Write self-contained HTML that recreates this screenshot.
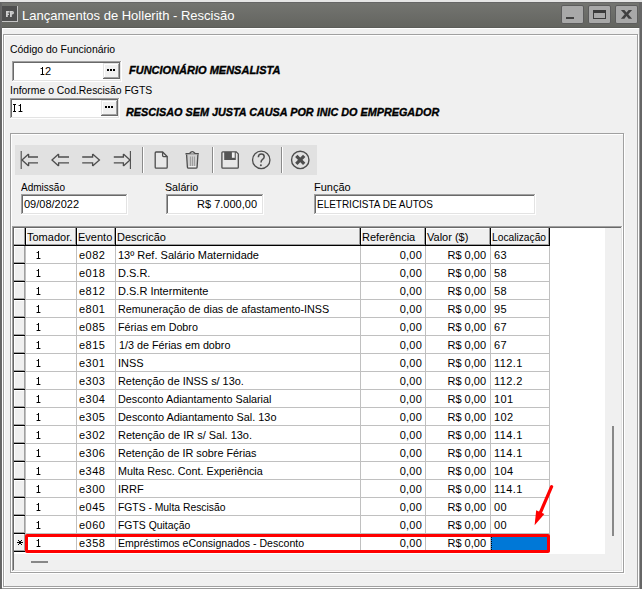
<!DOCTYPE html>
<html><head><meta charset="utf-8"><style>
html,body{margin:0;padding:0;}
body{width:642px;height:589px;overflow:hidden;position:relative;background:#f0f0f0;}
body>div,body>svg{position:absolute;}
.t{font-family:"Liberation Sans",sans-serif;font-size:11px;line-height:13px;color:#000;white-space:pre;}
</style></head><body>
<div style="left:0px;top:0px;width:642px;height:589px;background:#f0f0f0"></div>
<div style="left:0px;top:0px;width:642px;height:2px;background:#e6e6e6"></div>
<div style="left:0px;top:2px;width:642px;height:26px;background:linear-gradient(#747571,#63645f)"></div>
<div style="left:0px;top:2px;width:642px;height:1px;background:#666"></div>
<div style="left:0px;top:27px;width:642px;height:1px;background:#5c5d59"></div>
<div style="left:0px;top:2px;width:1px;height:587px;background:#646464"></div>
<div style="left:1px;top:2px;width:1px;height:587px;background:#686868"></div>
<div style="left:639px;top:2px;width:3px;height:587px;background:#666"></div>
<div style="left:639px;top:28px;width:1px;height:561px;background:#9a9a9a"></div>
<div style="left:2px;top:588px;width:638px;height:1px;background:#9a9a9a"></div>
<div style="left:2px;top:28px;width:637px;height:1px;background:#fff"></div>
<div style="left:2px;top:28px;width:1px;height:560px;background:#fff"></div>
<div style="left:4px;top:587px;width:635px;height:1px;background:#fff"></div>
<div style="left:638px;top:35px;width:1px;height:553px;background:#fff"></div>
<div style="left:4px;top:35px;width:634px;height:1px;background:#fff"></div>
<div style="left:4px;top:35px;width:1px;height:552px;background:#fff"></div>
<div style="left:3px;top:34px;width:635px;height:1px;background:#a0a0a0"></div>
<div style="left:3px;top:34px;width:1px;height:553px;background:#a0a0a0"></div>
<div style="left:3px;top:586px;width:635px;height:1px;background:#a0a0a0"></div>
<div style="left:637px;top:34px;width:1px;height:553px;background:#a0a0a0"></div>
<div style="left:2px;top:6px;width:16px;height:16px;background:#c4c4c4"></div>
<div style="left:2px;top:6px;width:15px;height:15px;background:#4f4f4f"></div>
<svg style="left:2px;top:6px" width="15" height="15" viewBox="2 6 15 15"><g fill="#cfcfcf"><rect x="6" y="11" width="1.8" height="6"/><rect x="6" y="11" width="3.6" height="1.6"/><rect x="6" y="13.6" width="3" height="1.4"/><rect x="10" y="11" width="1.8" height="6"/><path d="M10 11 H12.2 Q14 11 14 12.8 Q14 14.6 12.2 14.6 H10 V13.2 H12 Q12.5 13.2 12.5 12.8 Q12.5 12.4 12 12.4 H10 Z"/></g></svg>
<div class="t" style="left:22px;top:9px;font-size:13px;color:#fff">Lançamentos de Hollerith - Rescisão</div>
<div style="left:561px;top:5px;width:21px;height:17px;background:#a8a8a8;border:1px solid #5c5c5c;border-radius:2px"></div>
<div style="left:566px;top:17px;width:8px;height:2px;background:#404040"></div>
<div style="left:588px;top:5px;width:21px;height:17px;background:#a8a8a8;border:1px solid #5c5c5c;border-radius:2px"></div>
<div style="left:593px;top:10px;width:13px;height:9px;border:1px solid #3a3a3a;border-top-width:3px;box-sizing:border-box"></div>
<div style="left:615px;top:5px;width:21px;height:17px;background:#a8a8a8;border:1px solid #5c5c5c;border-radius:2px"></div>
<svg style="left:620px;top:9px" width="14" height="11" viewBox="620 9 14 11"><path d="M620.9 9.9 H624.4 L626.5 12.6 L628.6 9.9 H632.1 L628.3 14.35 L632.1 18.8 H628.6 L626.5 16.1 L624.4 18.8 H620.9 L624.7 14.35 Z" fill="#404040"/></svg>
<div class="t" style="left:10px;top:43px;transform:scaleX(0.95);transform-origin:left">Código do Funcionário</div>
<div style="left:12px;top:61px;width:110px;height:21px;background:#fff"></div>
<div style="left:12px;top:61px;width:110px;height:1px;background:#a0a0a0"></div>
<div style="left:12px;top:61px;width:1px;height:21px;background:#a0a0a0"></div>
<div style="left:12px;top:81px;width:110px;height:1px;background:#fff"></div>
<div style="left:121px;top:61px;width:1px;height:21px;background:#fff"></div>
<div style="left:13px;top:62px;width:108px;height:1px;background:#696969"></div>
<div style="left:13px;top:62px;width:1px;height:19px;background:#696969"></div>
<div style="left:13px;top:80px;width:108px;height:1px;background:#e3e3e3"></div>
<div style="left:120px;top:62px;width:1px;height:19px;background:#e3e3e3"></div>
<div style="left:42px;top:67px;width:1px;height:8px;background:#000"></div>
<div style="left:41px;top:68px;width:1px;height:1px;background:#222"></div>
<div style="left:40px;top:68px;width:1px;height:1px;background:#aaa"></div>
<div style="left:41px;top:74px;width:3px;height:1px;background:#000"></div>
<div style="left:40px;top:74px;width:1px;height:1px;background:#999"></div>
<div style="left:44px;top:74px;width:1px;height:1px;background:#999"></div>
<div class="t" style="left:45px;top:65px;">2</div>
<div style="left:103px;top:63px;width:17px;height:16px;background:#f0f0f0"></div>
<div style="left:103px;top:63px;width:17px;height:1px;background:#e3e3e3"></div>
<div style="left:103px;top:63px;width:1px;height:16px;background:#e3e3e3"></div>
<div style="left:103px;top:78px;width:17px;height:1px;background:#696969"></div>
<div style="left:119px;top:63px;width:1px;height:16px;background:#696969"></div>
<div style="left:104px;top:64px;width:15px;height:1px;background:#fff"></div>
<div style="left:104px;top:64px;width:1px;height:14px;background:#fff"></div>
<div style="left:104px;top:77px;width:15px;height:1px;background:#a0a0a0"></div>
<div style="left:118px;top:64px;width:1px;height:14px;background:#a0a0a0"></div>
<div style="left:107px;top:69px;width:2px;height:2px;background:#000"></div>
<div style="left:110px;top:69px;width:2px;height:2px;background:#000"></div>
<div style="left:113px;top:69px;width:2px;height:2px;background:#000"></div>
<div class="t" style="left:129px;top:64px;font-weight:bold;font-style:italic;-webkit-text-stroke:0.35px #000">FUNCIONÁRIO MENSALISTA</div>
<div class="t" style="left:10px;top:84px;transform:scaleX(0.946);transform-origin:left">Informe o Cod.Rescisão FGTS</div>
<div style="left:10px;top:98px;width:110px;height:21px;background:#fff"></div>
<div style="left:10px;top:98px;width:110px;height:1px;background:#a0a0a0"></div>
<div style="left:10px;top:98px;width:1px;height:21px;background:#a0a0a0"></div>
<div style="left:10px;top:118px;width:110px;height:1px;background:#fff"></div>
<div style="left:119px;top:98px;width:1px;height:21px;background:#fff"></div>
<div style="left:11px;top:99px;width:108px;height:1px;background:#696969"></div>
<div style="left:11px;top:99px;width:1px;height:19px;background:#696969"></div>
<div style="left:11px;top:117px;width:108px;height:1px;background:#e3e3e3"></div>
<div style="left:118px;top:99px;width:1px;height:19px;background:#e3e3e3"></div>
<div style="left:13px;top:104px;width:3px;height:1px;background:#000"></div>
<div style="left:14px;top:104px;width:1px;height:8px;background:#000"></div>
<div style="left:13px;top:111px;width:3px;height:1px;background:#000"></div>
<div style="left:20px;top:104px;width:1px;height:8px;background:#000"></div>
<div style="left:19px;top:105px;width:1px;height:1px;background:#222"></div>
<div style="left:18px;top:105px;width:1px;height:1px;background:#aaa"></div>
<div style="left:19px;top:111px;width:3px;height:1px;background:#000"></div>
<div style="left:18px;top:111px;width:1px;height:1px;background:#999"></div>
<div style="left:22px;top:111px;width:1px;height:1px;background:#999"></div>
<div style="left:101px;top:100px;width:17px;height:16px;background:#f0f0f0"></div>
<div style="left:101px;top:100px;width:17px;height:1px;background:#e3e3e3"></div>
<div style="left:101px;top:100px;width:1px;height:16px;background:#e3e3e3"></div>
<div style="left:101px;top:115px;width:17px;height:1px;background:#696969"></div>
<div style="left:117px;top:100px;width:1px;height:16px;background:#696969"></div>
<div style="left:102px;top:101px;width:15px;height:1px;background:#fff"></div>
<div style="left:102px;top:101px;width:1px;height:14px;background:#fff"></div>
<div style="left:102px;top:114px;width:15px;height:1px;background:#a0a0a0"></div>
<div style="left:116px;top:101px;width:1px;height:14px;background:#a0a0a0"></div>
<div style="left:105px;top:106px;width:2px;height:2px;background:#000"></div>
<div style="left:108px;top:106px;width:2px;height:2px;background:#000"></div>
<div style="left:111px;top:106px;width:2px;height:2px;background:#000"></div>
<div class="t" style="left:126px;top:106px;font-weight:bold;font-style:italic;-webkit-text-stroke:0.35px #000;transform:scaleX(0.983);transform-origin:left">RESCISAO SEM JUSTA CAUSA POR INIC DO EMPREGADOR</div>
<div style="left:11px;top:573px;width:614px;height:1px;background:#fff"></div>
<div style="left:624px;top:134px;width:1px;height:440px;background:#fff"></div>
<div style="left:11px;top:134px;width:613px;height:1px;background:#fff"></div>
<div style="left:11px;top:134px;width:1px;height:439px;background:#fff"></div>
<div style="left:10px;top:133px;width:614px;height:1px;background:#a0a0a0"></div>
<div style="left:10px;top:133px;width:1px;height:440px;background:#a0a0a0"></div>
<div style="left:10px;top:572px;width:614px;height:1px;background:#a0a0a0"></div>
<div style="left:623px;top:133px;width:1px;height:440px;background:#a0a0a0"></div>
<div style="left:15px;top:145px;width:302px;height:30px;background:#e1e1e1"></div>
<div class="t" style="left:21px;top:181px;transform:scaleX(0.91);transform-origin:left">Admissão</div>
<div style="left:21px;top:194px;width:107px;height:21px;background:#fff"></div>
<div style="left:21px;top:194px;width:107px;height:1px;background:#a0a0a0"></div>
<div style="left:21px;top:194px;width:1px;height:21px;background:#a0a0a0"></div>
<div style="left:21px;top:214px;width:107px;height:1px;background:#fff"></div>
<div style="left:127px;top:194px;width:1px;height:21px;background:#fff"></div>
<div style="left:22px;top:195px;width:105px;height:1px;background:#696969"></div>
<div style="left:22px;top:195px;width:1px;height:19px;background:#696969"></div>
<div style="left:22px;top:213px;width:105px;height:1px;background:#e3e3e3"></div>
<div style="left:126px;top:195px;width:1px;height:19px;background:#e3e3e3"></div>
<div class="t" style="left:24px;top:198px;">09/08/2022</div>
<div class="t" style="left:165px;top:181px;transform:scaleX(0.97);transform-origin:left">Salário</div>
<div style="left:166px;top:194px;width:98px;height:21px;background:#fff"></div>
<div style="left:166px;top:194px;width:98px;height:1px;background:#a0a0a0"></div>
<div style="left:166px;top:194px;width:1px;height:21px;background:#a0a0a0"></div>
<div style="left:166px;top:214px;width:98px;height:1px;background:#fff"></div>
<div style="left:263px;top:194px;width:1px;height:21px;background:#fff"></div>
<div style="left:167px;top:195px;width:96px;height:1px;background:#696969"></div>
<div style="left:167px;top:195px;width:1px;height:19px;background:#696969"></div>
<div style="left:167px;top:213px;width:96px;height:1px;background:#e3e3e3"></div>
<div style="left:262px;top:195px;width:1px;height:19px;background:#e3e3e3"></div>
<div class="t" style="left:166px;top:198px;width:91px;text-align:right">R$ 7.000,00</div>
<div class="t" style="left:314px;top:181px;">Função</div>
<div style="left:314px;top:194px;width:222px;height:21px;background:#fff"></div>
<div style="left:314px;top:194px;width:222px;height:1px;background:#a0a0a0"></div>
<div style="left:314px;top:194px;width:1px;height:21px;background:#a0a0a0"></div>
<div style="left:314px;top:214px;width:222px;height:1px;background:#fff"></div>
<div style="left:535px;top:194px;width:1px;height:21px;background:#fff"></div>
<div style="left:315px;top:195px;width:220px;height:1px;background:#696969"></div>
<div style="left:315px;top:195px;width:1px;height:19px;background:#696969"></div>
<div style="left:315px;top:213px;width:220px;height:1px;background:#e3e3e3"></div>
<div style="left:534px;top:195px;width:1px;height:19px;background:#e3e3e3"></div>
<div class="t" style="left:317px;top:198px;transform:scaleX(0.906);transform-origin:left">ELETRICISTA DE AUTOS</div>
<svg style="left:15px;top:145px" width="303" height="30" viewBox="15 145 303 30">
<g fill="none" stroke="#4d4d4d" stroke-width="1.3" stroke-linejoin="miter">
<path d="M21.2 151 V169" stroke-width="1.1"/>
<path d="M28.6 154.1 L22 160 L28.6 165.9 M28.6 154.1 V157 H38 M28.6 165.9 V162.8 H38"/>
<path d="M58.6 154.1 L52 160 L58.6 165.9 M58.6 154.1 V157 H69 M58.6 165.9 V162.8 H69"/>
<path d="M92.6 154.1 L99.4 160 L92.6 165.9 M92.6 154.1 V157 H82.2 M92.6 165.9 V162.8 H82.2"/>
<path d="M123.4 154.1 L130 160 L123.4 165.9 M123.4 154.1 V157 H113.8 M123.4 165.9 V162.8 H113.8"/>
<path d="M130.4 151 V169" stroke-width="1.1"/>
</g>
<path d="M142.5 147 V173" stroke="#8a8a8a" stroke-width="1"/><path d="M143.5 147 V173" stroke="#fff" stroke-width="1"/>
<path d="M212.5 147 V173" stroke="#8a8a8a" stroke-width="1"/><path d="M213.5 147 V173" stroke="#fff" stroke-width="1"/>
<path d="M281.5 147 V173" stroke="#8a8a8a" stroke-width="1"/><path d="M282.5 147 V173" stroke="#fff" stroke-width="1"/>
<!-- document -->
<path d="M156.1 152 H162.6 L167.2 156.6 V167.3 Q167.2 168.2 166.3 168.2 H156.1 Q155.2 168.2 155.2 167.3 V152.9 Q155.2 152 156.1 152 Z" fill="#e8e8e8" stroke="#4d4d4d" stroke-width="1.3"/>
<path d="M162.6 152 V155.6 Q162.6 156.6 163.6 156.6 H167.2" fill="none" stroke="#4d4d4d" stroke-width="1.3"/>
<!-- trash -->
<path d="M185.5 153.8 H198.8" stroke="#4d4d4d" stroke-width="1.6"/>
<path d="M189.6 153.5 Q192.3 149.8 195 153.5" fill="#f0f0f0" stroke="#4d4d4d" stroke-width="1.3"/>
<path d="M186.6 154.6 L187.4 167.2 Q187.5 168.2 188.5 168.2 H196 Q197 168.2 197.1 167.2 L197.9 154.6" fill="#d0d0d0" stroke="#4d4d4d" stroke-width="1.3"/>
<path d="M190.4 156.5 V166 M192.4 156.5 V166 M194.4 156.5 V166" stroke="#8a8a8a" stroke-width="0.8"/><path d="M188.6 166.6 H196" stroke="#f4f4f4" stroke-width="0.9"/>
<!-- floppy -->
<path d="M222.8 151.8 H236.2 L238.3 153.9 V167.3 Q238.3 168.2 237.4 168.2 H222.8 Q221.9 168.2 221.9 167.3 V152.7 Q221.9 151.8 222.8 151.8 Z" fill="#e8e8e8" stroke="#4d4d4d" stroke-width="1.3"/>
<rect x="224.2" y="152" width="11.6" height="8" fill="#555"/>
<rect x="231.9" y="152.4" width="2.8" height="5.4" fill="#f2f2f2"/>
<!-- help -->
<circle cx="261.25" cy="159.9" r="8.7" fill="none" stroke="#4d4d4d" stroke-width="1.3"/>
<path d="M258.3 157.3 Q258.5 154.1 261.3 154.1 Q264.2 154.1 264.2 156.8 Q264.2 158.4 262.6 159.4 Q261 160.4 261 162.4" fill="none" stroke="#4d4d4d" stroke-width="1.5"/><circle cx="260.9" cy="165.3" r="1" fill="#4d4d4d"/>
<!-- close -->
<circle cx="300.25" cy="159.9" r="8.7" fill="none" stroke="#4d4d4d" stroke-width="1.4"/>
<path d="M296.3 155.9 L304.2 163.8 M304.2 155.9 L296.3 163.8" stroke="#4d4d4d" stroke-width="3.3"/>
</svg>
<div style="left:12px;top:226px;width:611px;height:346px;background:#f0f0f0"></div>
<div style="left:12px;top:226px;width:611px;height:1px;background:#a0a0a0"></div>
<div style="left:12px;top:226px;width:1px;height:346px;background:#a0a0a0"></div>
<div style="left:12px;top:571px;width:611px;height:1px;background:#fff"></div>
<div style="left:622px;top:226px;width:1px;height:346px;background:#fff"></div>
<div style="left:13px;top:227px;width:609px;height:1px;background:#696969"></div>
<div style="left:13px;top:227px;width:1px;height:344px;background:#696969"></div>
<div style="left:13px;top:570px;width:609px;height:1px;background:#e3e3e3"></div>
<div style="left:621px;top:227px;width:1px;height:344px;background:#e3e3e3"></div>
<div style="left:14px;top:228px;width:591px;height:326px;background:#fff"></div>
<div style="left:14px;top:228px;width:12px;height:18px;background:#f0f0f0"></div>
<div style="left:14px;top:228px;width:12px;height:1px;background:#fff"></div>
<div style="left:14px;top:228px;width:1px;height:18px;background:#fff"></div>
<div style="left:14px;top:244px;width:11px;height:1px;background:#a0a0a0"></div>
<div style="left:24px;top:228px;width:1px;height:17px;background:#a0a0a0"></div>
<div style="left:14px;top:245px;width:12px;height:1px;background:#000"></div>
<div style="left:25px;top:228px;width:1px;height:18px;background:#000"></div>
<div style="left:26px;top:228px;width:51px;height:18px;background:#f0f0f0"></div>
<div style="left:26px;top:228px;width:51px;height:1px;background:#fff"></div>
<div style="left:26px;top:228px;width:1px;height:18px;background:#fff"></div>
<div style="left:26px;top:244px;width:50px;height:1px;background:#a0a0a0"></div>
<div style="left:75px;top:228px;width:1px;height:17px;background:#a0a0a0"></div>
<div style="left:26px;top:245px;width:51px;height:1px;background:#000"></div>
<div style="left:76px;top:228px;width:1px;height:18px;background:#000"></div>
<div class="t" style="left:27px;top:231px;">Tomador.</div>
<div style="left:77px;top:228px;width:39px;height:18px;background:#f0f0f0"></div>
<div style="left:77px;top:228px;width:39px;height:1px;background:#fff"></div>
<div style="left:77px;top:228px;width:1px;height:18px;background:#fff"></div>
<div style="left:77px;top:244px;width:38px;height:1px;background:#a0a0a0"></div>
<div style="left:114px;top:228px;width:1px;height:17px;background:#a0a0a0"></div>
<div style="left:77px;top:245px;width:39px;height:1px;background:#000"></div>
<div style="left:115px;top:228px;width:1px;height:18px;background:#000"></div>
<div class="t" style="left:78px;top:231px;">Evento</div>
<div style="left:116px;top:228px;width:245px;height:18px;background:#f0f0f0"></div>
<div style="left:116px;top:228px;width:245px;height:1px;background:#fff"></div>
<div style="left:116px;top:228px;width:1px;height:18px;background:#fff"></div>
<div style="left:116px;top:244px;width:244px;height:1px;background:#a0a0a0"></div>
<div style="left:359px;top:228px;width:1px;height:17px;background:#a0a0a0"></div>
<div style="left:116px;top:245px;width:245px;height:1px;background:#000"></div>
<div style="left:360px;top:228px;width:1px;height:18px;background:#000"></div>
<div class="t" style="left:117px;top:231px;">Descricão</div>
<div style="left:361px;top:228px;width:65px;height:18px;background:#f0f0f0"></div>
<div style="left:361px;top:228px;width:65px;height:1px;background:#fff"></div>
<div style="left:361px;top:228px;width:1px;height:18px;background:#fff"></div>
<div style="left:361px;top:244px;width:64px;height:1px;background:#a0a0a0"></div>
<div style="left:424px;top:228px;width:1px;height:17px;background:#a0a0a0"></div>
<div style="left:361px;top:245px;width:65px;height:1px;background:#000"></div>
<div style="left:425px;top:228px;width:1px;height:18px;background:#000"></div>
<div class="t" style="left:362px;top:231px;">Referência</div>
<div style="left:426px;top:228px;width:65px;height:18px;background:#f0f0f0"></div>
<div style="left:426px;top:228px;width:65px;height:1px;background:#fff"></div>
<div style="left:426px;top:228px;width:1px;height:18px;background:#fff"></div>
<div style="left:426px;top:244px;width:64px;height:1px;background:#a0a0a0"></div>
<div style="left:489px;top:228px;width:1px;height:17px;background:#a0a0a0"></div>
<div style="left:426px;top:245px;width:65px;height:1px;background:#000"></div>
<div style="left:490px;top:228px;width:1px;height:18px;background:#000"></div>
<div class="t" style="left:427px;top:231px;">Valor ($)</div>
<div style="left:491px;top:228px;width:59px;height:18px;background:#f0f0f0"></div>
<div style="left:491px;top:228px;width:59px;height:1px;background:#fff"></div>
<div style="left:491px;top:228px;width:1px;height:18px;background:#fff"></div>
<div style="left:491px;top:244px;width:58px;height:1px;background:#a0a0a0"></div>
<div style="left:548px;top:228px;width:1px;height:17px;background:#a0a0a0"></div>
<div style="left:491px;top:245px;width:59px;height:1px;background:#000"></div>
<div style="left:549px;top:228px;width:1px;height:18px;background:#000"></div>
<div class="t" style="left:492px;top:231px;transform:scaleX(0.93);transform-origin:left">Localização</div>
<div style="left:14px;top:246px;width:12px;height:18px;background:#f0f0f0"></div>
<div style="left:14px;top:246px;width:12px;height:1px;background:#fff"></div>
<div style="left:14px;top:246px;width:1px;height:18px;background:#fff"></div>
<div style="left:14px;top:262px;width:11px;height:1px;background:#a0a0a0"></div>
<div style="left:24px;top:246px;width:1px;height:17px;background:#a0a0a0"></div>
<div style="left:14px;top:263px;width:12px;height:1px;background:#000"></div>
<div style="left:25px;top:246px;width:1px;height:18px;background:#c0c0c0"></div>
<div style="left:76px;top:246px;width:1px;height:18px;background:#c0c0c0"></div>
<div style="left:115px;top:246px;width:1px;height:18px;background:#c0c0c0"></div>
<div style="left:360px;top:246px;width:1px;height:18px;background:#c0c0c0"></div>
<div style="left:425px;top:246px;width:1px;height:18px;background:#c0c0c0"></div>
<div style="left:490px;top:246px;width:1px;height:18px;background:#c0c0c0"></div>
<div style="left:549px;top:246px;width:1px;height:18px;background:#c0c0c0"></div>
<div style="left:26px;top:263px;width:524px;height:1px;background:#c0c0c0"></div>
<div style="left:38px;top:251px;width:1px;height:8px;background:#000"></div>
<div style="left:37px;top:252px;width:1px;height:1px;background:#222"></div>
<div style="left:36px;top:252px;width:1px;height:1px;background:#aaa"></div>
<div style="left:37px;top:258px;width:3px;height:1px;background:#000"></div>
<div style="left:36px;top:258px;width:1px;height:1px;background:#999"></div>
<div style="left:40px;top:258px;width:1px;height:1px;background:#999"></div>
<div class="t" style="left:79px;top:249px;letter-spacing:0.5px">e082</div>
<div class="t" style="left:118px;top:249px;">13º Ref. Salário Maternidade</div>
<div class="t" style="left:361px;top:249px;width:61px;text-align:right;letter-spacing:0.2px">0,00</div>
<div class="t" style="left:426px;top:249px;width:60px;text-align:right">R$ 0,00</div>
<div class="t" style="left:494px;top:249px;letter-spacing:0.4px">63</div>
<div style="left:14px;top:264px;width:12px;height:18px;background:#f0f0f0"></div>
<div style="left:14px;top:264px;width:12px;height:1px;background:#fff"></div>
<div style="left:14px;top:264px;width:1px;height:18px;background:#fff"></div>
<div style="left:14px;top:280px;width:11px;height:1px;background:#a0a0a0"></div>
<div style="left:24px;top:264px;width:1px;height:17px;background:#a0a0a0"></div>
<div style="left:14px;top:281px;width:12px;height:1px;background:#000"></div>
<div style="left:25px;top:264px;width:1px;height:18px;background:#c0c0c0"></div>
<div style="left:76px;top:264px;width:1px;height:18px;background:#c0c0c0"></div>
<div style="left:115px;top:264px;width:1px;height:18px;background:#c0c0c0"></div>
<div style="left:360px;top:264px;width:1px;height:18px;background:#c0c0c0"></div>
<div style="left:425px;top:264px;width:1px;height:18px;background:#c0c0c0"></div>
<div style="left:490px;top:264px;width:1px;height:18px;background:#c0c0c0"></div>
<div style="left:549px;top:264px;width:1px;height:18px;background:#c0c0c0"></div>
<div style="left:26px;top:281px;width:524px;height:1px;background:#c0c0c0"></div>
<div style="left:38px;top:269px;width:1px;height:8px;background:#000"></div>
<div style="left:37px;top:270px;width:1px;height:1px;background:#222"></div>
<div style="left:36px;top:270px;width:1px;height:1px;background:#aaa"></div>
<div style="left:37px;top:276px;width:3px;height:1px;background:#000"></div>
<div style="left:36px;top:276px;width:1px;height:1px;background:#999"></div>
<div style="left:40px;top:276px;width:1px;height:1px;background:#999"></div>
<div class="t" style="left:79px;top:267px;letter-spacing:0.5px">e018</div>
<div class="t" style="left:118px;top:267px;">D.S.R.</div>
<div class="t" style="left:361px;top:267px;width:61px;text-align:right;letter-spacing:0.2px">0,00</div>
<div class="t" style="left:426px;top:267px;width:60px;text-align:right">R$ 0,00</div>
<div class="t" style="left:494px;top:267px;letter-spacing:0.4px">58</div>
<div style="left:14px;top:282px;width:12px;height:18px;background:#f0f0f0"></div>
<div style="left:14px;top:282px;width:12px;height:1px;background:#fff"></div>
<div style="left:14px;top:282px;width:1px;height:18px;background:#fff"></div>
<div style="left:14px;top:298px;width:11px;height:1px;background:#a0a0a0"></div>
<div style="left:24px;top:282px;width:1px;height:17px;background:#a0a0a0"></div>
<div style="left:14px;top:299px;width:12px;height:1px;background:#000"></div>
<div style="left:25px;top:282px;width:1px;height:18px;background:#c0c0c0"></div>
<div style="left:76px;top:282px;width:1px;height:18px;background:#c0c0c0"></div>
<div style="left:115px;top:282px;width:1px;height:18px;background:#c0c0c0"></div>
<div style="left:360px;top:282px;width:1px;height:18px;background:#c0c0c0"></div>
<div style="left:425px;top:282px;width:1px;height:18px;background:#c0c0c0"></div>
<div style="left:490px;top:282px;width:1px;height:18px;background:#c0c0c0"></div>
<div style="left:549px;top:282px;width:1px;height:18px;background:#c0c0c0"></div>
<div style="left:26px;top:299px;width:524px;height:1px;background:#c0c0c0"></div>
<div style="left:38px;top:287px;width:1px;height:8px;background:#000"></div>
<div style="left:37px;top:288px;width:1px;height:1px;background:#222"></div>
<div style="left:36px;top:288px;width:1px;height:1px;background:#aaa"></div>
<div style="left:37px;top:294px;width:3px;height:1px;background:#000"></div>
<div style="left:36px;top:294px;width:1px;height:1px;background:#999"></div>
<div style="left:40px;top:294px;width:1px;height:1px;background:#999"></div>
<div class="t" style="left:79px;top:285px;letter-spacing:0.5px">e812</div>
<div class="t" style="left:118px;top:285px;">D.S.R Intermitente</div>
<div class="t" style="left:361px;top:285px;width:61px;text-align:right;letter-spacing:0.2px">0,00</div>
<div class="t" style="left:426px;top:285px;width:60px;text-align:right">R$ 0,00</div>
<div class="t" style="left:494px;top:285px;letter-spacing:0.4px">58</div>
<div style="left:14px;top:300px;width:12px;height:18px;background:#f0f0f0"></div>
<div style="left:14px;top:300px;width:12px;height:1px;background:#fff"></div>
<div style="left:14px;top:300px;width:1px;height:18px;background:#fff"></div>
<div style="left:14px;top:316px;width:11px;height:1px;background:#a0a0a0"></div>
<div style="left:24px;top:300px;width:1px;height:17px;background:#a0a0a0"></div>
<div style="left:14px;top:317px;width:12px;height:1px;background:#000"></div>
<div style="left:25px;top:300px;width:1px;height:18px;background:#c0c0c0"></div>
<div style="left:76px;top:300px;width:1px;height:18px;background:#c0c0c0"></div>
<div style="left:115px;top:300px;width:1px;height:18px;background:#c0c0c0"></div>
<div style="left:360px;top:300px;width:1px;height:18px;background:#c0c0c0"></div>
<div style="left:425px;top:300px;width:1px;height:18px;background:#c0c0c0"></div>
<div style="left:490px;top:300px;width:1px;height:18px;background:#c0c0c0"></div>
<div style="left:549px;top:300px;width:1px;height:18px;background:#c0c0c0"></div>
<div style="left:26px;top:317px;width:524px;height:1px;background:#c0c0c0"></div>
<div style="left:38px;top:305px;width:1px;height:8px;background:#000"></div>
<div style="left:37px;top:306px;width:1px;height:1px;background:#222"></div>
<div style="left:36px;top:306px;width:1px;height:1px;background:#aaa"></div>
<div style="left:37px;top:312px;width:3px;height:1px;background:#000"></div>
<div style="left:36px;top:312px;width:1px;height:1px;background:#999"></div>
<div style="left:40px;top:312px;width:1px;height:1px;background:#999"></div>
<div class="t" style="left:79px;top:303px;letter-spacing:0.5px">e801</div>
<div class="t" style="left:118px;top:303px;transform:scaleX(0.978);transform-origin:left">Remuneração de dias de afastamento-INSS</div>
<div class="t" style="left:361px;top:303px;width:61px;text-align:right;letter-spacing:0.2px">0,00</div>
<div class="t" style="left:426px;top:303px;width:60px;text-align:right">R$ 0,00</div>
<div class="t" style="left:494px;top:303px;letter-spacing:0.4px">95</div>
<div style="left:14px;top:318px;width:12px;height:18px;background:#f0f0f0"></div>
<div style="left:14px;top:318px;width:12px;height:1px;background:#fff"></div>
<div style="left:14px;top:318px;width:1px;height:18px;background:#fff"></div>
<div style="left:14px;top:334px;width:11px;height:1px;background:#a0a0a0"></div>
<div style="left:24px;top:318px;width:1px;height:17px;background:#a0a0a0"></div>
<div style="left:14px;top:335px;width:12px;height:1px;background:#000"></div>
<div style="left:25px;top:318px;width:1px;height:18px;background:#c0c0c0"></div>
<div style="left:76px;top:318px;width:1px;height:18px;background:#c0c0c0"></div>
<div style="left:115px;top:318px;width:1px;height:18px;background:#c0c0c0"></div>
<div style="left:360px;top:318px;width:1px;height:18px;background:#c0c0c0"></div>
<div style="left:425px;top:318px;width:1px;height:18px;background:#c0c0c0"></div>
<div style="left:490px;top:318px;width:1px;height:18px;background:#c0c0c0"></div>
<div style="left:549px;top:318px;width:1px;height:18px;background:#c0c0c0"></div>
<div style="left:26px;top:335px;width:524px;height:1px;background:#c0c0c0"></div>
<div style="left:38px;top:323px;width:1px;height:8px;background:#000"></div>
<div style="left:37px;top:324px;width:1px;height:1px;background:#222"></div>
<div style="left:36px;top:324px;width:1px;height:1px;background:#aaa"></div>
<div style="left:37px;top:330px;width:3px;height:1px;background:#000"></div>
<div style="left:36px;top:330px;width:1px;height:1px;background:#999"></div>
<div style="left:40px;top:330px;width:1px;height:1px;background:#999"></div>
<div class="t" style="left:79px;top:321px;letter-spacing:0.5px">e085</div>
<div class="t" style="left:118px;top:321px;transform:scaleX(0.975);transform-origin:left">Férias em Dobro</div>
<div class="t" style="left:361px;top:321px;width:61px;text-align:right;letter-spacing:0.2px">0,00</div>
<div class="t" style="left:426px;top:321px;width:60px;text-align:right">R$ 0,00</div>
<div class="t" style="left:494px;top:321px;letter-spacing:0.4px">67</div>
<div style="left:14px;top:336px;width:12px;height:18px;background:#f0f0f0"></div>
<div style="left:14px;top:336px;width:12px;height:1px;background:#fff"></div>
<div style="left:14px;top:336px;width:1px;height:18px;background:#fff"></div>
<div style="left:14px;top:352px;width:11px;height:1px;background:#a0a0a0"></div>
<div style="left:24px;top:336px;width:1px;height:17px;background:#a0a0a0"></div>
<div style="left:14px;top:353px;width:12px;height:1px;background:#000"></div>
<div style="left:25px;top:336px;width:1px;height:18px;background:#c0c0c0"></div>
<div style="left:76px;top:336px;width:1px;height:18px;background:#c0c0c0"></div>
<div style="left:115px;top:336px;width:1px;height:18px;background:#c0c0c0"></div>
<div style="left:360px;top:336px;width:1px;height:18px;background:#c0c0c0"></div>
<div style="left:425px;top:336px;width:1px;height:18px;background:#c0c0c0"></div>
<div style="left:490px;top:336px;width:1px;height:18px;background:#c0c0c0"></div>
<div style="left:549px;top:336px;width:1px;height:18px;background:#c0c0c0"></div>
<div style="left:26px;top:353px;width:524px;height:1px;background:#c0c0c0"></div>
<div style="left:38px;top:341px;width:1px;height:8px;background:#000"></div>
<div style="left:37px;top:342px;width:1px;height:1px;background:#222"></div>
<div style="left:36px;top:342px;width:1px;height:1px;background:#aaa"></div>
<div style="left:37px;top:348px;width:3px;height:1px;background:#000"></div>
<div style="left:36px;top:348px;width:1px;height:1px;background:#999"></div>
<div style="left:40px;top:348px;width:1px;height:1px;background:#999"></div>
<div class="t" style="left:79px;top:339px;letter-spacing:0.5px">e815</div>
<div class="t" style="left:115.5px;top:339px;transform:scaleX(0.98);transform-origin:left"> 1/3 de Férias em dobro</div>
<div class="t" style="left:361px;top:339px;width:61px;text-align:right;letter-spacing:0.2px">0,00</div>
<div class="t" style="left:426px;top:339px;width:60px;text-align:right">R$ 0,00</div>
<div class="t" style="left:494px;top:339px;letter-spacing:0.4px">67</div>
<div style="left:14px;top:354px;width:12px;height:18px;background:#f0f0f0"></div>
<div style="left:14px;top:354px;width:12px;height:1px;background:#fff"></div>
<div style="left:14px;top:354px;width:1px;height:18px;background:#fff"></div>
<div style="left:14px;top:370px;width:11px;height:1px;background:#a0a0a0"></div>
<div style="left:24px;top:354px;width:1px;height:17px;background:#a0a0a0"></div>
<div style="left:14px;top:371px;width:12px;height:1px;background:#000"></div>
<div style="left:25px;top:354px;width:1px;height:18px;background:#c0c0c0"></div>
<div style="left:76px;top:354px;width:1px;height:18px;background:#c0c0c0"></div>
<div style="left:115px;top:354px;width:1px;height:18px;background:#c0c0c0"></div>
<div style="left:360px;top:354px;width:1px;height:18px;background:#c0c0c0"></div>
<div style="left:425px;top:354px;width:1px;height:18px;background:#c0c0c0"></div>
<div style="left:490px;top:354px;width:1px;height:18px;background:#c0c0c0"></div>
<div style="left:549px;top:354px;width:1px;height:18px;background:#c0c0c0"></div>
<div style="left:26px;top:371px;width:524px;height:1px;background:#c0c0c0"></div>
<div style="left:38px;top:359px;width:1px;height:8px;background:#000"></div>
<div style="left:37px;top:360px;width:1px;height:1px;background:#222"></div>
<div style="left:36px;top:360px;width:1px;height:1px;background:#aaa"></div>
<div style="left:37px;top:366px;width:3px;height:1px;background:#000"></div>
<div style="left:36px;top:366px;width:1px;height:1px;background:#999"></div>
<div style="left:40px;top:366px;width:1px;height:1px;background:#999"></div>
<div class="t" style="left:79px;top:357px;letter-spacing:0.5px">e301</div>
<div class="t" style="left:118px;top:357px;">INSS</div>
<div class="t" style="left:361px;top:357px;width:61px;text-align:right;letter-spacing:0.2px">0,00</div>
<div class="t" style="left:426px;top:357px;width:60px;text-align:right">R$ 0,00</div>
<div class="t" style="left:494px;top:357px;letter-spacing:0.4px">112.1</div>
<div style="left:14px;top:372px;width:12px;height:18px;background:#f0f0f0"></div>
<div style="left:14px;top:372px;width:12px;height:1px;background:#fff"></div>
<div style="left:14px;top:372px;width:1px;height:18px;background:#fff"></div>
<div style="left:14px;top:388px;width:11px;height:1px;background:#a0a0a0"></div>
<div style="left:24px;top:372px;width:1px;height:17px;background:#a0a0a0"></div>
<div style="left:14px;top:389px;width:12px;height:1px;background:#000"></div>
<div style="left:25px;top:372px;width:1px;height:18px;background:#c0c0c0"></div>
<div style="left:76px;top:372px;width:1px;height:18px;background:#c0c0c0"></div>
<div style="left:115px;top:372px;width:1px;height:18px;background:#c0c0c0"></div>
<div style="left:360px;top:372px;width:1px;height:18px;background:#c0c0c0"></div>
<div style="left:425px;top:372px;width:1px;height:18px;background:#c0c0c0"></div>
<div style="left:490px;top:372px;width:1px;height:18px;background:#c0c0c0"></div>
<div style="left:549px;top:372px;width:1px;height:18px;background:#c0c0c0"></div>
<div style="left:26px;top:389px;width:524px;height:1px;background:#c0c0c0"></div>
<div style="left:38px;top:377px;width:1px;height:8px;background:#000"></div>
<div style="left:37px;top:378px;width:1px;height:1px;background:#222"></div>
<div style="left:36px;top:378px;width:1px;height:1px;background:#aaa"></div>
<div style="left:37px;top:384px;width:3px;height:1px;background:#000"></div>
<div style="left:36px;top:384px;width:1px;height:1px;background:#999"></div>
<div style="left:40px;top:384px;width:1px;height:1px;background:#999"></div>
<div class="t" style="left:79px;top:375px;letter-spacing:0.5px">e303</div>
<div class="t" style="left:118px;top:375px;transform:scaleX(0.989);transform-origin:left">Retenção de INSS s/ 13o.</div>
<div class="t" style="left:361px;top:375px;width:61px;text-align:right;letter-spacing:0.2px">0,00</div>
<div class="t" style="left:426px;top:375px;width:60px;text-align:right">R$ 0,00</div>
<div class="t" style="left:494px;top:375px;letter-spacing:0.4px">112.2</div>
<div style="left:14px;top:390px;width:12px;height:18px;background:#f0f0f0"></div>
<div style="left:14px;top:390px;width:12px;height:1px;background:#fff"></div>
<div style="left:14px;top:390px;width:1px;height:18px;background:#fff"></div>
<div style="left:14px;top:406px;width:11px;height:1px;background:#a0a0a0"></div>
<div style="left:24px;top:390px;width:1px;height:17px;background:#a0a0a0"></div>
<div style="left:14px;top:407px;width:12px;height:1px;background:#000"></div>
<div style="left:25px;top:390px;width:1px;height:18px;background:#c0c0c0"></div>
<div style="left:76px;top:390px;width:1px;height:18px;background:#c0c0c0"></div>
<div style="left:115px;top:390px;width:1px;height:18px;background:#c0c0c0"></div>
<div style="left:360px;top:390px;width:1px;height:18px;background:#c0c0c0"></div>
<div style="left:425px;top:390px;width:1px;height:18px;background:#c0c0c0"></div>
<div style="left:490px;top:390px;width:1px;height:18px;background:#c0c0c0"></div>
<div style="left:549px;top:390px;width:1px;height:18px;background:#c0c0c0"></div>
<div style="left:26px;top:407px;width:524px;height:1px;background:#c0c0c0"></div>
<div style="left:38px;top:395px;width:1px;height:8px;background:#000"></div>
<div style="left:37px;top:396px;width:1px;height:1px;background:#222"></div>
<div style="left:36px;top:396px;width:1px;height:1px;background:#aaa"></div>
<div style="left:37px;top:402px;width:3px;height:1px;background:#000"></div>
<div style="left:36px;top:402px;width:1px;height:1px;background:#999"></div>
<div style="left:40px;top:402px;width:1px;height:1px;background:#999"></div>
<div class="t" style="left:79px;top:393px;letter-spacing:0.5px">e304</div>
<div class="t" style="left:118px;top:393px;transform:scaleX(0.98);transform-origin:left">Desconto Adiantamento Salarial</div>
<div class="t" style="left:361px;top:393px;width:61px;text-align:right;letter-spacing:0.2px">0,00</div>
<div class="t" style="left:426px;top:393px;width:60px;text-align:right">R$ 0,00</div>
<div class="t" style="left:494px;top:393px;letter-spacing:0.4px">101</div>
<div style="left:14px;top:408px;width:12px;height:18px;background:#f0f0f0"></div>
<div style="left:14px;top:408px;width:12px;height:1px;background:#fff"></div>
<div style="left:14px;top:408px;width:1px;height:18px;background:#fff"></div>
<div style="left:14px;top:424px;width:11px;height:1px;background:#a0a0a0"></div>
<div style="left:24px;top:408px;width:1px;height:17px;background:#a0a0a0"></div>
<div style="left:14px;top:425px;width:12px;height:1px;background:#000"></div>
<div style="left:25px;top:408px;width:1px;height:18px;background:#c0c0c0"></div>
<div style="left:76px;top:408px;width:1px;height:18px;background:#c0c0c0"></div>
<div style="left:115px;top:408px;width:1px;height:18px;background:#c0c0c0"></div>
<div style="left:360px;top:408px;width:1px;height:18px;background:#c0c0c0"></div>
<div style="left:425px;top:408px;width:1px;height:18px;background:#c0c0c0"></div>
<div style="left:490px;top:408px;width:1px;height:18px;background:#c0c0c0"></div>
<div style="left:549px;top:408px;width:1px;height:18px;background:#c0c0c0"></div>
<div style="left:26px;top:425px;width:524px;height:1px;background:#c0c0c0"></div>
<div style="left:38px;top:413px;width:1px;height:8px;background:#000"></div>
<div style="left:37px;top:414px;width:1px;height:1px;background:#222"></div>
<div style="left:36px;top:414px;width:1px;height:1px;background:#aaa"></div>
<div style="left:37px;top:420px;width:3px;height:1px;background:#000"></div>
<div style="left:36px;top:420px;width:1px;height:1px;background:#999"></div>
<div style="left:40px;top:420px;width:1px;height:1px;background:#999"></div>
<div class="t" style="left:79px;top:411px;letter-spacing:0.5px">e305</div>
<div class="t" style="left:118px;top:411px;transform:scaleX(0.989);transform-origin:left">Desconto Adiantamento Sal. 13o</div>
<div class="t" style="left:361px;top:411px;width:61px;text-align:right;letter-spacing:0.2px">0,00</div>
<div class="t" style="left:426px;top:411px;width:60px;text-align:right">R$ 0,00</div>
<div class="t" style="left:494px;top:411px;letter-spacing:0.4px">102</div>
<div style="left:14px;top:426px;width:12px;height:18px;background:#f0f0f0"></div>
<div style="left:14px;top:426px;width:12px;height:1px;background:#fff"></div>
<div style="left:14px;top:426px;width:1px;height:18px;background:#fff"></div>
<div style="left:14px;top:442px;width:11px;height:1px;background:#a0a0a0"></div>
<div style="left:24px;top:426px;width:1px;height:17px;background:#a0a0a0"></div>
<div style="left:14px;top:443px;width:12px;height:1px;background:#000"></div>
<div style="left:25px;top:426px;width:1px;height:18px;background:#c0c0c0"></div>
<div style="left:76px;top:426px;width:1px;height:18px;background:#c0c0c0"></div>
<div style="left:115px;top:426px;width:1px;height:18px;background:#c0c0c0"></div>
<div style="left:360px;top:426px;width:1px;height:18px;background:#c0c0c0"></div>
<div style="left:425px;top:426px;width:1px;height:18px;background:#c0c0c0"></div>
<div style="left:490px;top:426px;width:1px;height:18px;background:#c0c0c0"></div>
<div style="left:549px;top:426px;width:1px;height:18px;background:#c0c0c0"></div>
<div style="left:26px;top:443px;width:524px;height:1px;background:#c0c0c0"></div>
<div style="left:38px;top:431px;width:1px;height:8px;background:#000"></div>
<div style="left:37px;top:432px;width:1px;height:1px;background:#222"></div>
<div style="left:36px;top:432px;width:1px;height:1px;background:#aaa"></div>
<div style="left:37px;top:438px;width:3px;height:1px;background:#000"></div>
<div style="left:36px;top:438px;width:1px;height:1px;background:#999"></div>
<div style="left:40px;top:438px;width:1px;height:1px;background:#999"></div>
<div class="t" style="left:79px;top:429px;letter-spacing:0.5px">e302</div>
<div class="t" style="left:118px;top:429px;transform:scaleX(0.996);transform-origin:left">Retenção de IR s/ Sal. 13o.</div>
<div class="t" style="left:361px;top:429px;width:61px;text-align:right;letter-spacing:0.2px">0,00</div>
<div class="t" style="left:426px;top:429px;width:60px;text-align:right">R$ 0,00</div>
<div class="t" style="left:494px;top:429px;letter-spacing:0.4px">114.1</div>
<div style="left:14px;top:444px;width:12px;height:18px;background:#f0f0f0"></div>
<div style="left:14px;top:444px;width:12px;height:1px;background:#fff"></div>
<div style="left:14px;top:444px;width:1px;height:18px;background:#fff"></div>
<div style="left:14px;top:460px;width:11px;height:1px;background:#a0a0a0"></div>
<div style="left:24px;top:444px;width:1px;height:17px;background:#a0a0a0"></div>
<div style="left:14px;top:461px;width:12px;height:1px;background:#000"></div>
<div style="left:25px;top:444px;width:1px;height:18px;background:#c0c0c0"></div>
<div style="left:76px;top:444px;width:1px;height:18px;background:#c0c0c0"></div>
<div style="left:115px;top:444px;width:1px;height:18px;background:#c0c0c0"></div>
<div style="left:360px;top:444px;width:1px;height:18px;background:#c0c0c0"></div>
<div style="left:425px;top:444px;width:1px;height:18px;background:#c0c0c0"></div>
<div style="left:490px;top:444px;width:1px;height:18px;background:#c0c0c0"></div>
<div style="left:549px;top:444px;width:1px;height:18px;background:#c0c0c0"></div>
<div style="left:26px;top:461px;width:524px;height:1px;background:#c0c0c0"></div>
<div style="left:38px;top:449px;width:1px;height:8px;background:#000"></div>
<div style="left:37px;top:450px;width:1px;height:1px;background:#222"></div>
<div style="left:36px;top:450px;width:1px;height:1px;background:#aaa"></div>
<div style="left:37px;top:456px;width:3px;height:1px;background:#000"></div>
<div style="left:36px;top:456px;width:1px;height:1px;background:#999"></div>
<div style="left:40px;top:456px;width:1px;height:1px;background:#999"></div>
<div class="t" style="left:79px;top:447px;letter-spacing:0.5px">e306</div>
<div class="t" style="left:118px;top:447px;transform:scaleX(0.985);transform-origin:left">Retenção de IR sobre Férias</div>
<div class="t" style="left:361px;top:447px;width:61px;text-align:right;letter-spacing:0.2px">0,00</div>
<div class="t" style="left:426px;top:447px;width:60px;text-align:right">R$ 0,00</div>
<div class="t" style="left:494px;top:447px;letter-spacing:0.4px">114.1</div>
<div style="left:14px;top:462px;width:12px;height:18px;background:#f0f0f0"></div>
<div style="left:14px;top:462px;width:12px;height:1px;background:#fff"></div>
<div style="left:14px;top:462px;width:1px;height:18px;background:#fff"></div>
<div style="left:14px;top:478px;width:11px;height:1px;background:#a0a0a0"></div>
<div style="left:24px;top:462px;width:1px;height:17px;background:#a0a0a0"></div>
<div style="left:14px;top:479px;width:12px;height:1px;background:#000"></div>
<div style="left:25px;top:462px;width:1px;height:18px;background:#c0c0c0"></div>
<div style="left:76px;top:462px;width:1px;height:18px;background:#c0c0c0"></div>
<div style="left:115px;top:462px;width:1px;height:18px;background:#c0c0c0"></div>
<div style="left:360px;top:462px;width:1px;height:18px;background:#c0c0c0"></div>
<div style="left:425px;top:462px;width:1px;height:18px;background:#c0c0c0"></div>
<div style="left:490px;top:462px;width:1px;height:18px;background:#c0c0c0"></div>
<div style="left:549px;top:462px;width:1px;height:18px;background:#c0c0c0"></div>
<div style="left:26px;top:479px;width:524px;height:1px;background:#c0c0c0"></div>
<div style="left:38px;top:467px;width:1px;height:8px;background:#000"></div>
<div style="left:37px;top:468px;width:1px;height:1px;background:#222"></div>
<div style="left:36px;top:468px;width:1px;height:1px;background:#aaa"></div>
<div style="left:37px;top:474px;width:3px;height:1px;background:#000"></div>
<div style="left:36px;top:474px;width:1px;height:1px;background:#999"></div>
<div style="left:40px;top:474px;width:1px;height:1px;background:#999"></div>
<div class="t" style="left:79px;top:465px;letter-spacing:0.5px">e348</div>
<div class="t" style="left:118px;top:465px;transform:scaleX(0.978);transform-origin:left">Multa Resc. Cont. Experiência</div>
<div class="t" style="left:361px;top:465px;width:61px;text-align:right;letter-spacing:0.2px">0,00</div>
<div class="t" style="left:426px;top:465px;width:60px;text-align:right">R$ 0,00</div>
<div class="t" style="left:494px;top:465px;letter-spacing:0.4px">104</div>
<div style="left:14px;top:480px;width:12px;height:18px;background:#f0f0f0"></div>
<div style="left:14px;top:480px;width:12px;height:1px;background:#fff"></div>
<div style="left:14px;top:480px;width:1px;height:18px;background:#fff"></div>
<div style="left:14px;top:496px;width:11px;height:1px;background:#a0a0a0"></div>
<div style="left:24px;top:480px;width:1px;height:17px;background:#a0a0a0"></div>
<div style="left:14px;top:497px;width:12px;height:1px;background:#000"></div>
<div style="left:25px;top:480px;width:1px;height:18px;background:#c0c0c0"></div>
<div style="left:76px;top:480px;width:1px;height:18px;background:#c0c0c0"></div>
<div style="left:115px;top:480px;width:1px;height:18px;background:#c0c0c0"></div>
<div style="left:360px;top:480px;width:1px;height:18px;background:#c0c0c0"></div>
<div style="left:425px;top:480px;width:1px;height:18px;background:#c0c0c0"></div>
<div style="left:490px;top:480px;width:1px;height:18px;background:#c0c0c0"></div>
<div style="left:549px;top:480px;width:1px;height:18px;background:#c0c0c0"></div>
<div style="left:26px;top:497px;width:524px;height:1px;background:#c0c0c0"></div>
<div style="left:38px;top:485px;width:1px;height:8px;background:#000"></div>
<div style="left:37px;top:486px;width:1px;height:1px;background:#222"></div>
<div style="left:36px;top:486px;width:1px;height:1px;background:#aaa"></div>
<div style="left:37px;top:492px;width:3px;height:1px;background:#000"></div>
<div style="left:36px;top:492px;width:1px;height:1px;background:#999"></div>
<div style="left:40px;top:492px;width:1px;height:1px;background:#999"></div>
<div class="t" style="left:79px;top:483px;letter-spacing:0.5px">e300</div>
<div class="t" style="left:118px;top:483px;">IRRF</div>
<div class="t" style="left:361px;top:483px;width:61px;text-align:right;letter-spacing:0.2px">0,00</div>
<div class="t" style="left:426px;top:483px;width:60px;text-align:right">R$ 0,00</div>
<div class="t" style="left:494px;top:483px;letter-spacing:0.4px">114.1</div>
<div style="left:14px;top:498px;width:12px;height:18px;background:#f0f0f0"></div>
<div style="left:14px;top:498px;width:12px;height:1px;background:#fff"></div>
<div style="left:14px;top:498px;width:1px;height:18px;background:#fff"></div>
<div style="left:14px;top:514px;width:11px;height:1px;background:#a0a0a0"></div>
<div style="left:24px;top:498px;width:1px;height:17px;background:#a0a0a0"></div>
<div style="left:14px;top:515px;width:12px;height:1px;background:#000"></div>
<div style="left:25px;top:498px;width:1px;height:18px;background:#c0c0c0"></div>
<div style="left:76px;top:498px;width:1px;height:18px;background:#c0c0c0"></div>
<div style="left:115px;top:498px;width:1px;height:18px;background:#c0c0c0"></div>
<div style="left:360px;top:498px;width:1px;height:18px;background:#c0c0c0"></div>
<div style="left:425px;top:498px;width:1px;height:18px;background:#c0c0c0"></div>
<div style="left:490px;top:498px;width:1px;height:18px;background:#c0c0c0"></div>
<div style="left:549px;top:498px;width:1px;height:18px;background:#c0c0c0"></div>
<div style="left:26px;top:515px;width:524px;height:1px;background:#c0c0c0"></div>
<div style="left:38px;top:503px;width:1px;height:8px;background:#000"></div>
<div style="left:37px;top:504px;width:1px;height:1px;background:#222"></div>
<div style="left:36px;top:504px;width:1px;height:1px;background:#aaa"></div>
<div style="left:37px;top:510px;width:3px;height:1px;background:#000"></div>
<div style="left:36px;top:510px;width:1px;height:1px;background:#999"></div>
<div style="left:40px;top:510px;width:1px;height:1px;background:#999"></div>
<div class="t" style="left:79px;top:501px;letter-spacing:0.5px">e045</div>
<div class="t" style="left:118px;top:501px;transform:scaleX(0.94);transform-origin:left">FGTS - Multa Rescisão</div>
<div class="t" style="left:361px;top:501px;width:61px;text-align:right;letter-spacing:0.2px">0,00</div>
<div class="t" style="left:426px;top:501px;width:60px;text-align:right">R$ 0,00</div>
<div class="t" style="left:494px;top:501px;letter-spacing:0.4px">00</div>
<div style="left:14px;top:516px;width:12px;height:18px;background:#f0f0f0"></div>
<div style="left:14px;top:516px;width:12px;height:1px;background:#fff"></div>
<div style="left:14px;top:516px;width:1px;height:18px;background:#fff"></div>
<div style="left:14px;top:532px;width:11px;height:1px;background:#a0a0a0"></div>
<div style="left:24px;top:516px;width:1px;height:17px;background:#a0a0a0"></div>
<div style="left:14px;top:533px;width:12px;height:1px;background:#000"></div>
<div style="left:25px;top:516px;width:1px;height:18px;background:#c0c0c0"></div>
<div style="left:76px;top:516px;width:1px;height:18px;background:#c0c0c0"></div>
<div style="left:115px;top:516px;width:1px;height:18px;background:#c0c0c0"></div>
<div style="left:360px;top:516px;width:1px;height:18px;background:#c0c0c0"></div>
<div style="left:425px;top:516px;width:1px;height:18px;background:#c0c0c0"></div>
<div style="left:490px;top:516px;width:1px;height:18px;background:#c0c0c0"></div>
<div style="left:549px;top:516px;width:1px;height:18px;background:#c0c0c0"></div>
<div style="left:26px;top:533px;width:524px;height:1px;background:#c0c0c0"></div>
<div style="left:38px;top:521px;width:1px;height:8px;background:#000"></div>
<div style="left:37px;top:522px;width:1px;height:1px;background:#222"></div>
<div style="left:36px;top:522px;width:1px;height:1px;background:#aaa"></div>
<div style="left:37px;top:528px;width:3px;height:1px;background:#000"></div>
<div style="left:36px;top:528px;width:1px;height:1px;background:#999"></div>
<div style="left:40px;top:528px;width:1px;height:1px;background:#999"></div>
<div class="t" style="left:79px;top:519px;letter-spacing:0.5px">e060</div>
<div class="t" style="left:118px;top:519px;transform:scaleX(0.946);transform-origin:left">FGTS Quitação</div>
<div class="t" style="left:361px;top:519px;width:61px;text-align:right;letter-spacing:0.2px">0,00</div>
<div class="t" style="left:426px;top:519px;width:60px;text-align:right">R$ 0,00</div>
<div class="t" style="left:494px;top:519px;letter-spacing:0.4px">00</div>
<div style="left:14px;top:534px;width:12px;height:18px;background:#f0f0f0"></div>
<div style="left:14px;top:534px;width:12px;height:1px;background:#fff"></div>
<div style="left:14px;top:534px;width:1px;height:18px;background:#fff"></div>
<div style="left:14px;top:550px;width:11px;height:1px;background:#a0a0a0"></div>
<div style="left:24px;top:534px;width:1px;height:17px;background:#a0a0a0"></div>
<div style="left:14px;top:551px;width:12px;height:1px;background:#000"></div>
<div style="left:25px;top:534px;width:1px;height:18px;background:#c0c0c0"></div>
<div style="left:76px;top:534px;width:1px;height:18px;background:#c0c0c0"></div>
<div style="left:115px;top:534px;width:1px;height:18px;background:#c0c0c0"></div>
<div style="left:360px;top:534px;width:1px;height:18px;background:#c0c0c0"></div>
<div style="left:425px;top:534px;width:1px;height:18px;background:#c0c0c0"></div>
<div style="left:490px;top:534px;width:1px;height:18px;background:#c0c0c0"></div>
<div style="left:549px;top:534px;width:1px;height:18px;background:#c0c0c0"></div>
<div style="left:26px;top:551px;width:524px;height:1px;background:#c0c0c0"></div>
<div style="left:38px;top:539px;width:1px;height:8px;background:#000"></div>
<div style="left:37px;top:540px;width:1px;height:1px;background:#222"></div>
<div style="left:36px;top:540px;width:1px;height:1px;background:#aaa"></div>
<div style="left:37px;top:546px;width:3px;height:1px;background:#000"></div>
<div style="left:36px;top:546px;width:1px;height:1px;background:#999"></div>
<div style="left:40px;top:546px;width:1px;height:1px;background:#999"></div>
<div class="t" style="left:79px;top:537px;letter-spacing:0.5px">e358</div>
<div class="t" style="left:118px;top:537px;transform:scaleX(0.96);transform-origin:left">Empréstimos eConsignados - Desconto</div>
<div class="t" style="left:361px;top:537px;width:61px;text-align:right;letter-spacing:0.2px">0,00</div>
<div class="t" style="left:426px;top:537px;width:60px;text-align:right">R$ 0,00</div>
<div style="left:17px;top:542px;width:6px;height:1px;background:#000"></div>
<div style="left:19px;top:541px;width:2px;height:3px;background:#000"></div>
<div style="left:18px;top:540px;width:1px;height:1px;background:#000"></div>
<div style="left:21px;top:540px;width:1px;height:1px;background:#000"></div>
<div style="left:18px;top:544px;width:1px;height:1px;background:#000"></div>
<div style="left:21px;top:544px;width:1px;height:1px;background:#000"></div>
<div style="left:491px;top:537px;width:56px;height:13px;background:#0078d7"></div>
<div style="left:491px;top:537px;width:1px;height:1px;background:#000"></div>
<div style="left:491px;top:539px;width:1px;height:1px;background:#000"></div>
<div style="left:491px;top:541px;width:1px;height:1px;background:#000"></div>
<div style="left:491px;top:543px;width:1px;height:1px;background:#000"></div>
<div style="left:491px;top:545px;width:1px;height:1px;background:#000"></div>
<div style="left:491px;top:547px;width:1px;height:1px;background:#000"></div>
<div style="left:491px;top:549px;width:1px;height:1px;background:#000"></div>
<div style="left:25px;top:534px;width:519px;height:13px;border:3px solid #f00;border-radius:2px"></div>
<div style="left:612px;top:426px;width:2px;height:110px;background:#888"></div>
<div style="left:31px;top:561px;width:17px;height:2px;background:#888"></div>
<svg style="left:530px;top:482px" width="28" height="46" viewBox="530 482 28 46"><path d="M551.6 486.6 L540.2 513" stroke="#f00" stroke-width="3.2" stroke-linecap="round"/><path d="M534.6 525.3 L536.2 510.2 L544.4 513.9 Z" fill="#f00"/></svg>
</body></html>
